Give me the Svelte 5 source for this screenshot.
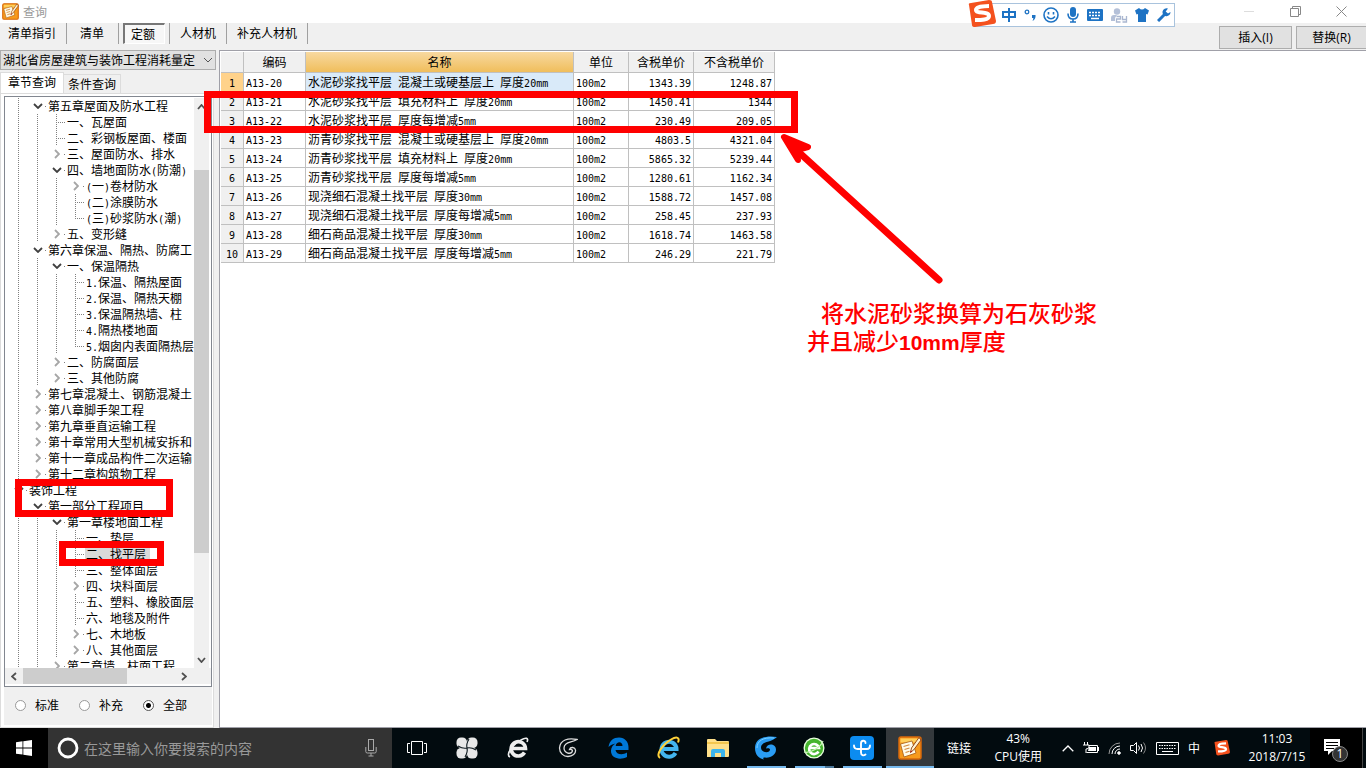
<script>
  const tools = ['清单指引', '清单', '定额', '人材机', '补充人材机'];
  let tool = $state('定额');
  let scope = $state('全部');

  // kind: open / closed = expandable node, tee / end = leaf connector
  const nodes = [
    [1, 'open', '第五章屋面及防水工程'],
    [2, 'tee', '一、瓦屋面'],
    [2, 'tee', '二、彩钢板屋面、楼面'],
    [2, 'closed', '三、屋面防水、排水'],
    [2, 'open', '四、墙地面防水(防潮)'],
    [3, 'closed', '(一)卷材防水'],
    [3, 'tee', '(二)涂膜防水'],
    [3, 'end', '(三)砂浆防水(潮)'],
    [2, 'closed', '五、变形缝'],
    [1, 'open', '第六章保温、隔热、防腐工'],
    [2, 'open', '一、保温隔热'],
    [3, 'tee', '1.保温、隔热屋面'],
    [3, 'tee', '2.保温、隔热天棚'],
    [3, 'tee', '3.保温隔热墙、柱'],
    [3, 'tee', '4.隔热楼地面'],
    [3, 'end', '5.烟囱内表面隔热层'],
    [2, 'closed', '二、防腐面层'],
    [2, 'closed', '三、其他防腐'],
    [1, 'closed', '第七章混凝土、钢筋混凝土'],
    [1, 'closed', '第八章脚手架工程'],
    [1, 'closed', '第九章垂直运输工程'],
    [1, 'closed', '第十章常用大型机械安拆和'],
    [1, 'closed', '第十一章成品构件二次运输'],
    [1, 'closed', '第十二章构筑物工程'],
    [0, 'open', '装饰工程'],
    [1, 'open', '第一部分工程项目'],
    [2, 'open', '第一章楼地面工程'],
    [3, 'tee', '一、垫层'],
    [3, 'tee', '二、找平层'],
    [3, 'tee', '三、整体面层'],
    [3, 'closed', '四、块料面层'],
    [3, 'tee', '五、塑料、橡胶面层'],
    [3, 'tee', '六、地毯及附件'],
    [3, 'closed', '七、木地板'],
    [3, 'closed', '八、其他面层'],
    [2, 'closed', '第二章墙、柱面工程']
  ];
  let picked = $state('二、找平层');

  const rows = [
    ['A13-20', '水泥砂浆找平层 混凝土或硬基层上 厚度20mm', '1343.39', '1248.87'],
    ['A13-21', '水泥砂浆找平层 填充材料上 厚度20mm', '1450.41', '1344'],
    ['A13-22', '水泥砂浆找平层 厚度每增减5mm', '230.49', '209.05'],
    ['A13-23', '沥青砂浆找平层 混凝土或硬基层上 厚度20mm', '4803.5', '4321.04'],
    ['A13-24', '沥青砂浆找平层 填充材料上 厚度20mm', '5865.32', '5239.44'],
    ['A13-25', '沥青砂浆找平层 厚度每增减5mm', '1280.61', '1162.34'],
    ['A13-26', '现浇细石混凝土找平层 厚度30mm', '1588.72', '1457.08'],
    ['A13-27', '现浇细石混凝土找平层 厚度每增减5mm', '258.45', '237.93'],
    ['A13-28', '细石商品混凝土找平层 厚度30mm', '1618.74', '1463.58'],
    ['A13-29', '细石商品混凝土找平层 厚度每增减5mm', '246.29', '221.79']
  ];

  // split a label into Chinese and half-width runs
  const runs = (s) => s.match(/[\x20-\x7e]+|[^\x20-\x7e]+/g);
  const half = (s) => /^[\x20-\x7e]/.test(s);
</script>

{#snippet mixed(s)}{#each runs(s) as r}{#if half(r)}<span class="half">{r}</span>{:else}{r}{/if}{/each}{/snippet}

{#snippet sogou(size)}
  <svg width={size} height={size} viewBox="0 0 28 28" aria-hidden="true">
    <path d="M1 5 Q0 3 3 3 L21 0 Q24 0 24 2 L28 21 Q28 24 25 24 L7 27 Q4 27 4 25 Z" fill="#f4511e" />
    <path d="M21 6 C15 6 8 7 8 10 C8 14 21 11 21 16 C21 20 13 20 7 20" fill="none" stroke="#fff" stroke-width="4" />
  </svg>
{/snippet}

{#snippet book(size)}
  <svg width={size} height={size} viewBox="0 0 24 24" aria-hidden="true">
    <rect x="1" y="1" width="22" height="22" rx="2" fill="#f79a1c" stroke="#d8680a" stroke-width="1.5" />
    <path d="M2.500 2.500h19v4h-19z" fill="#ffcf5a" />
    <path d="M2.500 8 L14 5 L18 17 L6 21 Z" fill="#fffbe8" stroke="#a65a10" stroke-width=".8" />
    <path d="M5.500 10.500l6-1.800M6.500 13.500l5-1.500M7.500 16.500l4-1.200" stroke="#d08a40" stroke-width="1.200" />
    <path d="M21 1.500 L13.500 12 L12.500 16.500 L16 13.500 L23 4 Z" fill="#fff3d0" stroke="#8a3a10" stroke-width=".9" />
    <path d="M12.300 16.800l.5-2.300 1.500 1z" fill="#b01810" />
  </svg>
{/snippet}

<div class="screen">
  <header class="title">
    {@render book(17)}
    <span class="name">查询</span>
    <div class="winbtns">
      <button aria-label="最小化"><svg width="11" height="11" viewBox="0 0 11 11"><path d="M0 5.500h10" stroke="#ddd" /></svg></button>
      <button aria-label="还原"><svg width="11" height="11" viewBox="0 0 11 11" fill="none" stroke="#888"><path d="M.5 2.500h8v8h-8zM2.500 2V.5h8v8H9" /></svg></button>
      <button aria-label="关闭"><svg width="11" height="11" viewBox="0 0 11 11"><path d="M.5.5l10 10M10.500.5l-10 10" stroke="#888" /></svg></button>
    </div>
  </header>

  <nav class="toolbar">
    {#each tools as t}
      <div class="slot"><button class:on={tool === t} onclick={() => (tool = t)}>{t}</button></div>
    {/each}
    <div class="actions">
      <button class="push">插入<span class="key">(I)</span></button>
      <button class="push cut">替换<span class="key">(R)</span></button>
    </div>
  </nav>

  <main>
    <aside>
      <div class="combo">
        <select aria-label="定额库"><option>湖北省房屋建筑与装饰工程消耗量定</option></select>
        <svg width="10" height="6" viewBox="0 0 10 6"><path d="M1 1l4 4 4-4" fill="none" stroke="#555" /></svg>
      </div>
      <div class="tabs">
        <button class="tab on">章节查询</button>
        <button class="tab">条件查询</button>
      </div>
      <div class="page">
        <div class="treebox">
          <div class="view">
            <ul>
              {#each nodes as [level, kind, label]}
                <li>
                  {#each Array(level) as _}<i class="cell line"></i>{/each}
                  <i class="cell {kind}">
                    {#if kind === 'open'}
                      <svg width="10" height="6" viewBox="0 0 10 6"><path d="M1 1l4 4 4-4" fill="none" stroke="#404040" stroke-width="1.800" /></svg>
                    {:else if kind === 'closed'}
                      <svg width="6" height="10" viewBox="0 0 6 10"><path d="M1 1l4 4-4 4" fill="none" stroke="#a6a6a6" stroke-width="1.800" /></svg>
                    {/if}
                  </i>
                  <button class="label" class:picked={picked === label} onclick={() => (picked = label)}>{@render mixed(label)}</button>
                </li>
              {/each}
            </ul>
            <div class="vbar">
              <svg width="9" height="6" viewBox="0 0 9 6"><path d="M1 5l3.500-4L8 5" fill="none" stroke="#505050" stroke-width="1.800" /></svg>
              <div class="vtrack"><div class="vthumb"></div></div>
              <svg width="9" height="6" viewBox="0 0 9 6"><path d="M1 1l3.500 4L8 1" fill="none" stroke="#505050" stroke-width="1.800" /></svg>
            </div>
          </div>
          <div class="hbar">
            <svg width="6" height="9" viewBox="0 0 6 9"><path d="M5 1L1 4.500 5 8" fill="none" stroke="#505050" stroke-width="1.800" /></svg>
            <div class="htrack"><div class="hthumb"></div></div>
            <svg width="6" height="9" viewBox="0 0 6 9"><path d="M1 1l4 3.500L1 8" fill="none" stroke="#505050" stroke-width="1.800" /></svg>
          </div>
        </div>
        <div class="radios">
          {#each ['标准', '补充', '全部'] as r}
            <label><input type="radio" name="scope" value={r} bind:group={scope} />{r}</label>
          {/each}
        </div>
      </div>
    </aside>

    <section class="grid">
      <table>
        <colgroup><col class="c0" /><col class="c1" /><col class="c2" /><col class="c3" /><col class="c4" /><col class="c5" /></colgroup>
        <thead>
          <tr><th></th><th>编码</th><th class="hot">名称</th><th>单位</th><th>含税单价</th><th>不含税单价</th></tr>
        </thead>
        <tbody>
          {#each rows as [code, name, a, b], i}
            <tr class:cur={i === 0}>
              <th><span class="half">{i + 1}</span></th>
              <td><span class="half">{code}</span></td>
              <td class="nm">{@render mixed(name)}</td>
              <td><span class="half">100m2</span></td>
              <td class="num"><span class="half">{a}</span></td>
              <td class="num"><span class="half">{b}</span></td>
            </tr>
          {/each}
        </tbody>
      </table>
    </section>
  </main>

  <footer>
    <button class="start" aria-label="开始">
      <svg width="16" height="16" viewBox="0 0 16 16" fill="#fff"><path d="M0 2.200l6.500-.9v6.200H0zM7.300 1.200L16 0v7.500H7.300zM0 8.400h6.500v6.200L0 13.700zM7.300 8.400H16V16l-8.700-1.200z" /></svg>
    </button>
    <div class="search">
      <svg width="22" height="22" viewBox="0 0 22 22"><circle cx="11" cy="11" r="9" fill="none" stroke="#fff" stroke-width="2.800" /></svg>
      <input aria-label="搜索" placeholder="在这里输入你要搜索的内容" />
      <svg width="12" height="18" viewBox="0 0 12 18" fill="none" stroke="#aaa"><rect x="3.500" y=".5" width="5" height="11" /><path d="M.8 8v4.500q0 1.500 1.500 1.500h7.400q1.500 0 1.500-1.500V8M6 14v3M3.500 17h5" /></svg>
    </div>
    <div class="pins">
      <button aria-label="任务视图"><svg width="20" height="14" viewBox="0 0 20 14" fill="none" stroke="#fff"><path d="M4.500.5h11v13h-11zM3 2.500H.5v9H3M17 2.500h2.500v9H17" /></svg></button>
      <button aria-label="助手">
        <svg width="22" height="22" viewBox="0 0 22 22" fill="#e8e8e8">
          <rect x="0.500" y="0.500" width="10.500" height="10.500" rx="4.500" />
          <rect x="11" y="0.500" width="10.500" height="10.500" rx="4.500" />
          <rect x="0.500" y="11" width="10.500" height="10.500" rx="4.500" />
          <rect x="11" y="11" width="10.500" height="10.500" rx="4.500" />
          <path d="M7 7h8v8H7z" />
          <path d="M11 11Q7 12 2 9M11 11Q10 7 13 2M11 11Q15 10 20 13M11 11Q12 15 9 20" fill="none" stroke="#08141a" stroke-width="1.100" />
        </svg>
      </button>
      <button aria-label="浏览器">
        <svg width="22" height="22" viewBox="0 0 22 22" fill="none" stroke="#eee"><path d="M17.500 15.500A7.200 7.200 0 1 1 18.500 11.500H6" stroke-width="3.600" /><path d="M3 20C-2 18 6 7 14 3c5-3 8-2 6 2" stroke-width="1.600" /></svg>
      </button>
      <button aria-label="广联达">
        <svg width="20" height="20" viewBox="0 0 20 20" fill="none" stroke="#ddd" stroke-width="1.300"><path d="M19 1.500C10-.5 2 2 1.500 10c0 5 4 8.500 8.500 8.500s8-3 7.500-6.500c-.5-3-5-3.500-6-.5 2.500-.5 3.500 1 2.500 2.500-2 2.500-8 1-8-4C6 4 13 5 19 1.500z" /></svg>
      </button>
      <button aria-label="Edge">
        <svg width="21" height="22" viewBox="0 0 21 22"><path d="M.5 10C1.500 3.500 5.500.5 11 .5c6 0 9.500 4.500 9.500 9.500V13H7.500c.5 4.500 7 5.500 11.500 2.500V20C12 23.500 2.500 21.500 3 13.500 3.200 10 5 8 7.500 6.500 5.500 7 3 7.500.5 10zm7.200-1h6.800c.1-5-6.300-4.800-6.800 0z" fill="#0078d7" /></svg>
      </button>
      <button aria-label="Internet Explorer">
        <svg width="24" height="24" viewBox="0 0 24 24" fill="none"><path d="M18.500 17A7.500 7.500 0 1 1 19.500 13H6.500" stroke="#43b5ef" stroke-width="4" /><path d="M3 22C-2 19 6 8 14 3.500c6-3.500 9-2 7 3" stroke="#ffd23a" stroke-width="2" /></svg>
      </button>
    </div>
    <div class="apps">
      <button aria-label="文件资源管理器">
        <svg width="22" height="18" viewBox="0 0 22 18"><path d="M0 1q0-1 1-1h7l2 2h11q1 0 1 1v14q0 1-1 1H0z" fill="#ffe08a" /><path d="M0 3h22v2H0z" fill="#f3c64e" /><path d="M4 18v-6q0-2 2-2h10q2 0 2 2v6h-4v-4H8v4z" fill="#3cb4ec" /></svg>
      </button>
      <button class="run" aria-label="广联达计价">
        <svg width="24" height="24" viewBox="0 0 24 24"><path d="M23 1C10-1 1 3 1 12c0 7 4 10.500 9 11.500-1-1-1-2 0-2 7 1 12-3 12-8 0-6-9-7-10-1 4-1 5 1 3 3-3 2-8 0-8-4C7 5 17 7 23 1z" fill="#2a9df4" /><path d="M20 2C9 1 3 5 3 12" stroke="#7cd0ff" fill="none" /></svg>
      </button>
      <button class="run more" aria-label="安全浏览器">
        <svg width="22" height="22" viewBox="0 0 22 22"><circle cx="11" cy="11" r="10.500" fill="#eaffdf" /><circle cx="11" cy="11" r="9.200" fill="#46b52e" /><path d="M15.500 14.500A5 5 0 1 1 16 11H7" fill="none" stroke="#fff" stroke-width="2.600" /><path d="M1 15C7 17 18 10 20 4" fill="none" stroke="#c9f5b6" stroke-width="1.200" /></svg>
      </button>
      <button class="run" aria-label="云计价">
        <svg width="24" height="24" viewBox="0 0 24 24"><rect width="24" height="24" rx="4" fill="#0c8cf0" /><path d="M15.500 7c0-3-4.500-3-4.500.5v9c0 3 2.500 3.500 4.500 2M4 9.500c0 2.500 1 3.500 3.500 3.500H17c2.500 0 3-1 3-3.500" fill="none" stroke="#fff" stroke-width="1.900" stroke-linecap="round" /></svg>
      </button>
      <button class="run active" aria-label="查询">{@render book(24)}</button>
    </div>
    <span class="link">链接</span>
    <div class="two cpu"><span>43%</span><span>CPU使用</span></div>
    <div class="tray">
      <svg width="12" height="7" viewBox="0 0 12 7"><path d="M.7 6.300L6 1l5.300 5.300" fill="none" stroke="#fff" stroke-width="1.300" /></svg>
      <svg width="16" height="12" viewBox="0 0 16 12"><path d="M1.500 0v3M4.500 0v3M0 3h6v2q0 2-3 2v4M6 3.500h8.500v7H3.500" fill="none" stroke="#fff" /><path d="M6 5h7v4H5z" fill="#fff" /><path d="M15 5h1v4h-1z" fill="#fff" /></svg>
      <svg width="13" height="13" viewBox="0 0 13 13" fill="none" stroke="#fff"><path d="M1 12A11 11 0 0 1 12 1" stroke="#999" /><path d="M4 12a8 8 0 0 1 8-8M7 12a5 5 0 0 1 5-5" /><circle cx="11" cy="11" r="1.300" fill="#fff" /></svg>
      <svg width="17" height="14" viewBox="0 0 17 14" fill="none" stroke="#fff"><path d="M.5 4.500h3l3-3v11l-3-3h-3zM8.500 4.500q2 2.500 0 5" /><path d="M11 3q3 4 0 8" /><path d="M13.500 1.500q4 5.500 0 11" stroke="#888" /></svg>
      <svg width="23" height="13" viewBox="0 0 23 13" fill="none" stroke="#fff"><path d="M.5.5h22v12H.5z" /><path d="M3 3.500h17M3 6.500h17" stroke-dasharray="1.500 1" /><path d="M6 9.500h11" /></svg>
      <span class="ime">中</span>
      {@render sogou(16)}
    </div>
    <div class="two clock"><span>11:03</span><span>2018/7/15</span></div>
    <button class="note" aria-label="通知">
      <svg width="26" height="24" viewBox="0 0 26 24"><path d="M1 1h16v12H9l-4 4v-4H1z" fill="#fff" /><path d="M3 4.500h12M3 7.500h12M3 10.500h8" stroke="#000" /><circle cx="17" cy="16" r="7.500" fill="#333" stroke="#888" /></svg>
      <span>1</span>
    </button>
  </footer>

  <div class="imebar">
    <span class="logo">{@render sogou(28)}</span>
    <svg width="14" height="14" viewBox="0 0 14 14" fill="none" stroke="#1e73c4" stroke-width="2"><path d="M1 4h12v5H1zM7 0v14" /></svg>
    <svg width="12" height="12" viewBox="0 0 12 12"><circle cx="3" cy="3" r="1.800" fill="none" stroke="#1e73c4" stroke-width="1.300" /><path d="M8 6h3.500q.5 4-3 6 1-2 .8-3H8z" fill="#1e73c4" /></svg>
    <svg width="16" height="16" viewBox="0 0 16 16" fill="none" stroke="#1e73c4" stroke-width="1.600"><circle cx="8" cy="8" r="7" /><path d="M5.500 5v2.500M10.500 5v2.500M4 9.500q4 4.500 8 0" /></svg>
    <svg width="12" height="16" viewBox="0 0 12 16" fill="none" stroke="#1e73c4"><rect x="3" y="0" width="6" height="10" rx="3" fill="#1e73c4" stroke="none" /><path d="M1 6.500q0 5.500 5 5.500t5-5.500M6 12v3M3 15h6" stroke-width="1.600" /></svg>
    <svg width="16" height="12" viewBox="0 0 16 12"><rect width="16" height="12" rx="1" fill="#1e73c4" /><path d="M2 3.500h12M2 6.500h12" stroke="#fff" stroke-width="1.500" stroke-dasharray="2 1" /><path d="M4 9.500h8" stroke="#fff" stroke-width="1.500" /></svg>
    <svg width="17" height="15" viewBox="0 0 17 15"><circle cx="6" cy="3.500" r="3.200" fill="#b4c0d8" /><path d="M0 13V10q0-3 3-3h3L4 10v3z" fill="#b4c0d8" /><path d="M5.500 8.500h4v2.500h-4v3h4M11.500 8v3.500h4M15.500 8v6h-4" fill="none" stroke="#a9b6d0" stroke-width="1.300" /></svg>
    <svg width="14" height="14" viewBox="0 0 14 14" fill="#1e73c4"><path d="M4 0q3 3 6 0l4 2.500-1.500 4L11 6v8H3V6l-1.500.5L0 2.500z" /></svg>
    <svg width="14" height="14" viewBox="0 0 14 14"><path d="M1 13l7-7" stroke="#1e73c4" stroke-width="3" /><path d="M11 .5A4 4 0 1 0 13.500 4L11 5.500 8.700 3.500z" fill="#1e73c4" /></svg>
  </div>

  <div class="mark rows"></div>
  <div class="mark chapter"></div>
  <div class="mark item"></div>
  <svg class="arrow" width="166" height="154" viewBox="0 0 166 154" aria-hidden="true">
    <path d="M161 149L14 15" stroke="#f00" stroke-width="7" stroke-linecap="round" />
    <path d="M6 6L30 16L19 19L20 29Z" fill="#f00" stroke="#f00" stroke-width="6" stroke-linejoin="round" />
  </svg>
  <div class="remark"><p class="indent">将水泥砂浆换算为石灰砂浆</p><p>并且减少<b>10mm</b>厚度</p></div>
</div>

<style>
  :global(body) { margin: 0; overflow: hidden; }
  .screen {
    position: relative; height: 100vh; overflow: hidden; display: flex; flex-direction: column;
    background: #f0f0f0; color: #000; font: 12px/16px "Noto Sans CJK SC", sans-serif;
  }
  .screen * { box-sizing: border-box; }
  button { font: inherit; color: inherit; border: 0; background: none; padding: 0; margin: 0; }
  svg { display: block; flex: none; }
  .half { font-family: "DejaVu Sans Mono", monospace; font-size: 10px; line-height: 10px; white-space: pre; }

  .title { height: 23px; flex: none; background: #fff; display: flex; align-items: center; padding-left: 2px; gap: 4px; color: #999; }
  .winbtns { margin-left: auto; display: flex; }
  .winbtns button { width: 46px; height: 20px; display: grid; place-items: center; }
  .winbtns button:last-child { margin-right: 2px; }

  .toolbar { height: 27px; flex: none; display: flex; align-items: flex-start; }
  .slot { height: 21px; padding: 0 4px; border-right: 1px solid #a0a0a0; display: flex; }
  .slot button { height: 20px; padding: 0 6px; }
  .slot:first-child { padding: 0 4px 0 2px; }
  .slot:nth-child(2) { padding: 0 4px 0 0; margin-left: 3px; }
  .slot:nth-child(2) button { padding: 0 10px; }
  .slot button.on { background: #f7f7f7; border: 1px solid #fff; border-top: 2px solid #777; border-left: 2px solid #777; height: 21px; padding: 0 9px 0 6px; }
  .actions { margin-left: auto; display: flex; gap: 4px; padding-top: 3px; }
  .push { width: 73px; height: 23px; border: 1px solid #adadad; background: #e1e1e1; }
  .push.cut { width: 70px; border-right: 0; }
  .key { font-family: "Open Sans", sans-serif; }

  main { flex: 1; min-height: 0; display: flex; gap: 5px; }
  aside { width: 214px; flex: none; display: flex; flex-direction: column; }
  .combo { height: 20px; display: flex; align-items: center; border: 1px solid #adadad; background: #e1e1e1; padding: 0 2px; margin: 0 -2px 2px 0; }
  select { flex: 1; min-width: 0; height: 18px; appearance: none; border: 0; background: none; font: inherit; color: #000; padding: 0; margin: 0; }
  .tabs { display: flex; align-items: flex-end; height: 21px; }
  .tab { height: 19px; padding: 0 4px; border: 1px solid #dcdcdc; border-bottom: 0; border-left: 0; }
  .tab.on { height: 21px; background: #fff; padding: 0 7px 2px; border-left: 1px solid #dcdcdc; }
  .page { flex: 1; min-height: 0; display: flex; flex-direction: column; background: #fff; border: 1px solid #dcdcdc; padding: 2px 1px 2px 3px; }
  .treebox { flex: 1; min-height: 0; display: flex; flex-direction: column; border: 1px solid #828790; padding: 1px 2px 2px 0; }
  .view { flex: 1; min-height: 0; display: flex; }
  ul { flex: 1; min-width: 0; margin: 0; padding: 0 0 0 4px; overflow: hidden; list-style: none; }
  li { height: 16px; display: flex; white-space: nowrap; }
  .cell { width: 19px; height: 16px; flex: none; display: grid; place-items: center; background-repeat: no-repeat; }
  .line, .tee, .end { background-image: repeating-linear-gradient(#808080 0 1px, transparent 1px 2px); background-size: 1px 16px; background-position: 9px 0; }
  .tee { background-image: repeating-linear-gradient(#808080 0 1px, transparent 1px 2px), repeating-linear-gradient(90deg, #808080 0 1px, transparent 1px 2px); background-size: 1px 16px, 9px 1px; background-position: 9px 0, 9px 8px; }
  .end { background-image: repeating-linear-gradient(#808080 0 1px, transparent 1px 2px), repeating-linear-gradient(90deg, #808080 0 1px, transparent 1px 2px); background-size: 1px 9px, 9px 1px; background-position: 9px 0, 9px 8px; }
  .open, .closed { background-image: linear-gradient(#808080, #808080); background-size: 1px 1px; background-position: 17px 8px; }
  .label { height: 16px; line-height: 16px; padding: 0 4px 0 1px; white-space: nowrap; }
  .picked { background: #d9d9d9; }
  .vbar { width: 15px; flex: none; background: #f0f0f0; display: flex; flex-direction: column; align-items: center; padding: 6px 0 5px; }
  .vtrack { flex: 1; align-self: stretch; padding: 60px 0 104px; display: flex; }
  .vthumb { flex: 1; background: #cdcdcd; }
  .hbar { height: 16px; flex: none; background: #f0f0f0; display: flex; align-items: center; padding: 0 24px 0 6px; margin-right: -2px; }
  .htrack { flex: 1; align-self: stretch; padding: 0 0 0 6px; }
  .hthumb { width: 66%; height: 100%; background: #cdcdcd; }
  .radios { height: 38px; flex: none; background: #f0f0f0; display: flex; align-items: center; padding: 0 0 2px 11px; gap: 20px; }
  .radios label { display: flex; align-items: center; gap: 9px; }
  .radios input { appearance: none; width: 11px; height: 11px; margin: 0; border: 1px solid #999; border-radius: 50%; background: #fff; }
  .radios input:checked { border-color: #555; background: radial-gradient(circle, #000 0 2px, #fff 3px); }

  .grid { flex: 1; min-width: 0; background: #fff; border: 1px solid #a0a0a8; border-right: 0; padding: 1px 0 0 1px; }
  table { border-collapse: separate; border-spacing: 0; table-layout: fixed; width: 554px; }
  .c0 { width: 23px; } .c1 { width: 62px; } .c2 { width: 268px; } .c3 { width: 55px; } .c4 { width: 65px; } .c5 { width: 81px; }
  th, td { height: 19px; padding: 0 2px; border: 0 solid #c0c0c0; border-width: 0 1px 1px 0; font-weight: 400; text-align: left; line-height: 16px; white-space: pre; overflow: hidden; }
  th { background: #f0f0f0; text-align: center; padding: 0; }
  thead th { height: 21px; }
  th.hot { background: linear-gradient(#f8d9a0, #f0be5c); }
  .cur th { background: #ffd28a; }
  .cur .nm { background: #d9eaf9; }
  .num { text-align: right; }

  footer { height: 40px; flex: none; display: flex; background: #020b0f; color: #fff; }
  footer button { display: grid; place-items: center; }
  .start { width: 48px; background: #000; }
  .search { width: 344px; background: #333; display: flex; align-items: center; padding: 0 15px 0 9px; gap: 5px; }
  .search input { flex: 1; min-width: 0; border: 0; outline: 0; background: none; padding: 0; font: 14px/20px "Noto Sans CJK SC", sans-serif; color: #fff; }
  .search input::placeholder { color: #999; opacity: 1; }
  .pins { width: 302px; display: grid; grid-template-columns: repeat(6, 1fr); }
  .apps { display: flex; }
  .apps button { width: 48px; background: linear-gradient(#76b9ed, #76b9ed) center bottom / 0 2px no-repeat; }
  .apps .run { background-size: 39px 2px; }
  .apps .more { background-image: linear-gradient(90deg, #76b9ed 30px, #4b7799 30px); }
  .apps .active { background-color: #34393c; background-size: 48px 2px; }
  .link { align-self: center; padding-left: 13px; }
  .two { display: flex; flex-direction: column; justify-content: center; align-items: center; line-height: 18px; font-family: "Open Sans", "Noto Sans CJK SC", sans-serif; }
  .cpu { margin-left: auto; padding-right: 20px; }
  .tray { display: flex; align-items: center; gap: 9px; }
  .ime { padding-right: 5px; }
  .clock { width: 80px; padding-left: 14px; }
  .note { width: 53px; background: #000; border-right: 1px solid #444; margin-right: 3px; grid-template-areas: "a"; }
  .note svg, .note span { grid-area: a; }
  .note svg { margin: 4px 0 0; }
  .note span { padding: 12px 0 0 8px; font: 12px/16px "Open Sans", sans-serif; }

  .imebar { position: absolute; left: 975px; top: 3px; width: 200px; height: 24px; background: #fff; border: 1px solid #a9c3dd; display: flex; align-items: center; justify-content: space-between; padding: 0 3px 0 26px; }
  .logo { position: absolute; left: -8px; top: -4px; }
  .mark { position: absolute; border: 7px solid #f00; pointer-events: none; }
  .rows { left: 204px; top: 91px; width: 594px; height: 42px; }
  .chapter { left: 15px; top: 479px; width: 158px; height: 38px; }
  .item { left: 59px; top: 541px; width: 105px; height: 25px; }
  .arrow { position: absolute; left: 778px; top: 131px; }
  .remark { position: absolute; left: 807px; top: 298px; color: #f00; font-size: 23px; line-height: 28px; font-weight: 500; white-space: nowrap; }
  .remark p { margin: 0; }
  .remark .indent { padding-left: 14px; }
  .remark b { font: bold 21px "Liberation Sans", sans-serif; }
</style>
